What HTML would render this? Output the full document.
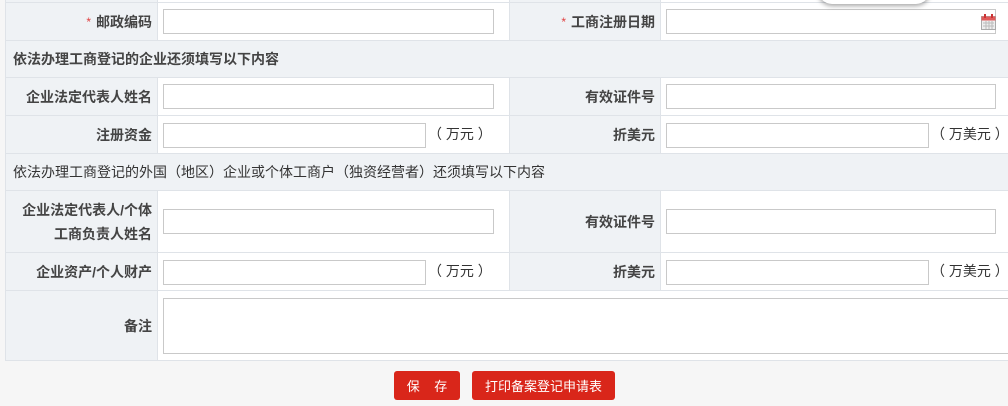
<!DOCTYPE html>
<html><head><meta charset="utf-8"><style>
*{margin:0;padding:0;box-sizing:border-box}
body{width:1008px;height:406px;overflow:hidden;background:#f6f6f6;font-family:"Liberation Sans","Noto Sans CJK SC",sans-serif;font-size:14px;color:#333;position:relative}
.grid{position:absolute;left:5px;top:-5px;width:1010px;height:366px;background:#dfe3e8}
.c{position:absolute}
.l{background:#eff2f5;text-align:right;padding-right:5px;font-weight:bold;color:#444;display:flex;align-items:center;justify-content:flex-end;line-height:24px;white-space:nowrap}
.v{background:#fff}
.s{background:#eff2f5;font-weight:bold;color:#444;padding-left:7px;display:flex;align-items:center;white-space:nowrap}
.i{position:absolute;background:#fff;border:1px solid #c9c9c9;height:25px}
.u{position:absolute;font-size:14px;color:#333;white-space:pre}
.r{color:#e04040;font-weight:normal;margin-right:5px;font-size:12px}
.b{position:absolute;top:371px;height:29px;background:#d9261a;color:#fff;border-radius:3px;font-size:13px;display:flex;align-items:center;justify-content:center;white-space:pre}
</style></head><body>
<div class="grid"></div>
<div class="c l" style="left:6px;top:-5px;width:151px;height:7px"></div>
<div class="c v" style="left:158px;top:-5px;width:351px;height:7px"></div>
<div class="c l" style="left:510px;top:-5px;width:150px;height:7px"></div>
<div class="c v" style="left:661px;top:-5px;width:360px;height:7px"></div>

<div class="c l" style="left:6px;top:3px;width:151px;height:37px"><span class="r">*</span>邮政编码</div>
<div class="c v" style="left:158px;top:3px;width:351px;height:37px"></div>
<div class="c l" style="left:510px;top:3px;width:150px;height:37px"><span class="r">*</span>工商注册日期</div>
<div class="c v" style="left:661px;top:3px;width:360px;height:37px"></div>

<div class="c s" style="left:6px;top:41px;width:1015px;height:36px">依法办理工商登记的企业还须填写以下内容</div>

<div class="c l" style="left:6px;top:78px;width:151px;height:37px">企业法定代表人姓名</div>
<div class="c v" style="left:158px;top:78px;width:351px;height:37px"></div>
<div class="c l" style="left:510px;top:78px;width:150px;height:37px">有效证件号</div>
<div class="c v" style="left:661px;top:78px;width:360px;height:37px"></div>

<div class="c l" style="left:6px;top:116px;width:151px;height:37px">注册资金</div>
<div class="c v" style="left:158px;top:116px;width:351px;height:37px"></div>
<div class="c l" style="left:510px;top:116px;width:150px;height:37px">折美元</div>
<div class="c v" style="left:661px;top:116px;width:360px;height:37px"></div>

<div class="c s" style="left:6px;top:154px;width:1015px;height:36px;font-weight:normal;color:#333">依法办理工商登记的外国（地区）企业或个体工商户（独资经营者）还须填写以下内容</div>

<div class="c l" style="left:6px;top:191px;width:151px;height:61px">企业法定代表人/个体<br>工商负责人姓名</div>
<div class="c v" style="left:158px;top:191px;width:351px;height:61px"></div>
<div class="c l" style="left:510px;top:191px;width:150px;height:61px">有效证件号</div>
<div class="c v" style="left:661px;top:191px;width:360px;height:61px"></div>

<div class="c l" style="left:6px;top:253px;width:151px;height:37px">企业资产/个人财产</div>
<div class="c v" style="left:158px;top:253px;width:351px;height:37px"></div>
<div class="c l" style="left:510px;top:253px;width:150px;height:37px">折美元</div>
<div class="c v" style="left:661px;top:253px;width:360px;height:37px"></div>

<div class="c l" style="left:6px;top:291px;width:151px;height:69px">备注</div>
<div class="c v" style="left:158px;top:291px;width:863px;height:69px"></div>

<div class="i" style="left:163px;top:9px;width:331px"></div>
<div class="i" style="left:666px;top:9px;width:330px"></div>
<svg style="position:absolute;left:981px;top:14px" width="15" height="16" viewBox="0 0 15 16"><rect x="0.5" y="2.5" width="14" height="13" fill="#eee" stroke="#aaa"/><rect x="0.5" y="2.5" width="14" height="4" fill="#e05a5a"/><rect x="3" y="0" width="2" height="4" fill="#c33"/><rect x="10" y="0" width="2" height="4" fill="#c33"/><path d="M2 9h11M2 12h11M5 7v8M8 7v8M11 7v8" stroke="#bbb"/></svg>
<div class="i" style="left:163px;top:84px;width:331px"></div>
<div class="i" style="left:666px;top:84px;width:330px"></div>
<div class="i" style="left:163px;top:123px;width:263px"></div>
<div class="u" style="left:428px;top:124px">（ 万元 ）</div>
<div class="i" style="left:666px;top:123px;width:263px"></div>
<div class="u" style="left:931px;top:124px">（ 万美元 ）</div>
<div class="i" style="left:163px;top:209px;width:331px"></div>
<div class="i" style="left:666px;top:209px;width:330px"></div>
<div class="i" style="left:163px;top:260px;width:263px"></div>
<div class="u" style="left:428px;top:261px">（ 万元 ）</div>
<div class="i" style="left:666px;top:260px;width:263px"></div>
<div class="u" style="left:931px;top:261px">（ 万美元 ）</div>
<div class="i" style="left:163px;top:298px;width:860px;height:56px"></div>

<div style="position:absolute;left:818px;top:-20px;width:112px;height:24px;background:#fff;border-radius:0 0 14px 14px;box-shadow:0 2px 5px rgba(0,0,0,.35)"></div>

<div class="b" style="left:394px;width:66px">保    存</div>
<div class="b" style="left:472px;width:143px">打印备案登记申请表</div>
</body></html>
